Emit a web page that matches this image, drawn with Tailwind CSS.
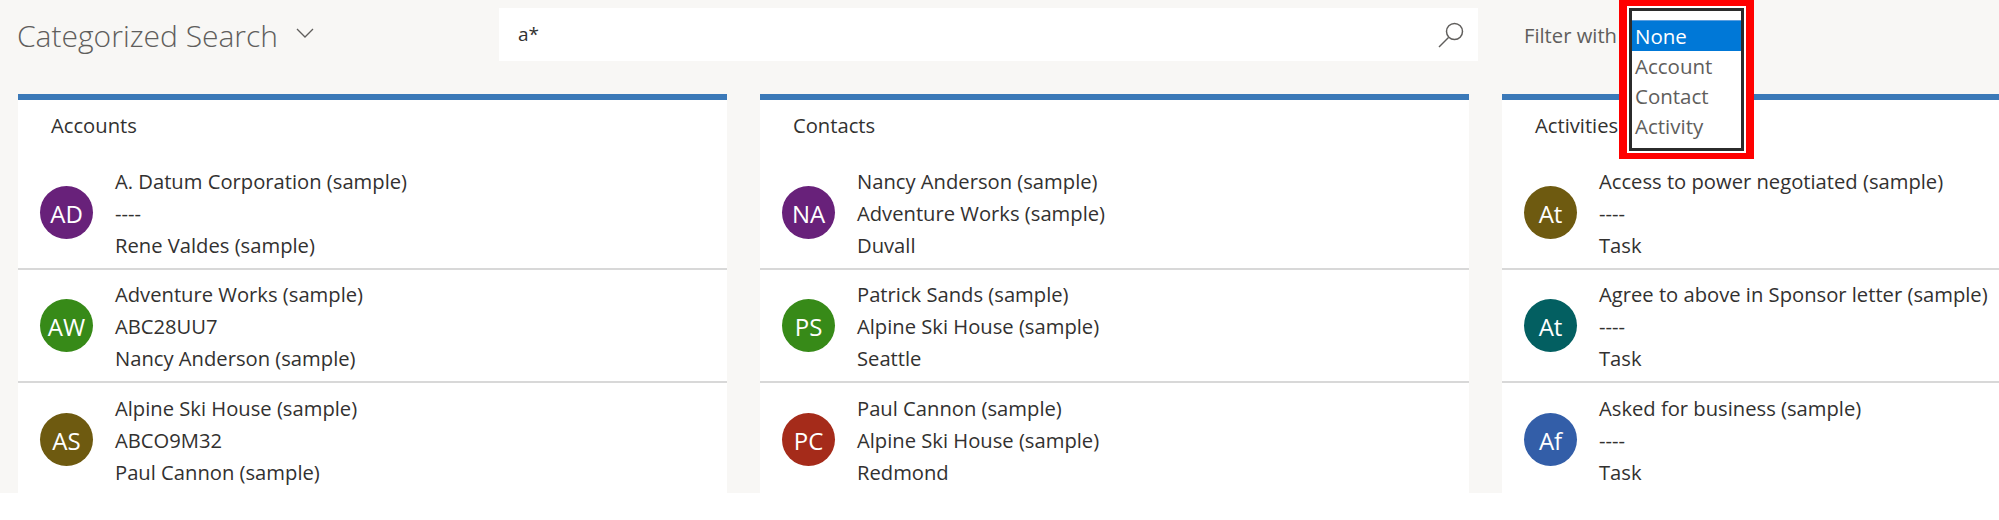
<!DOCTYPE html>
<html>
<head>
<meta charset="utf-8">
<script src="https://cdn.jsdelivr.net/npm/@tailwindcss/browser@4"></script>
</head>
<body class="bg-white font-['Open_Sans',sans-serif]">
<div class="relative h-[493px] overflow-hidden bg-[#f8f7f5] text-[#323130]">
  <header class="flex h-[94px] items-start">
    <div class="ml-[17px] mt-[13px] flex h-[45px] w-[482px] items-center">
      <h1 class="text-[30px] font-light leading-[45px] text-[#605e5c]">Categorized Search</h1>
      <svg class="mb-[6px] ml-[18px]" width="18" height="10" viewBox="0 0 18 10" fill="none" stroke="#605e5c" stroke-width="1.3"><path d="M1 1l8 8 8-8"/></svg>
    </div>
    <div class="mt-[8px] flex h-[53px] w-[979px] items-center justify-between bg-white pl-[19px] pr-[13px]">
      <span class="text-[19px]">a*</span>
      <svg width="28" height="28" viewBox="0 0 28 28" fill="none" stroke="#605e5c" stroke-width="1.5"><circle cx="17.5" cy="10.5" r="8"/><path d="M11.5 16.5L2 26"/></svg>
    </div>
    <span class="ml-[46px] mt-[22px] text-[20.2px] leading-[26px] text-[#605e5c]">Filter with</span>
  </header>

  <main class="flex gap-[33px] pl-[18px]">
    <section class="w-[709px] shrink-0 border-t-[6px] border-[#3b79b8] bg-white">
      <h2 class="pl-[33px] pt-[10px] pb-[17px] text-[20.2px] leading-[30px]">Accounts</h2>
      <ul class="divide-y-2 divide-[#d8d8d8]">
        <li class="flex h-[113px] items-center pl-[22px]"><div class="flex size-[53px] shrink-0 items-center justify-center rounded-full bg-[#68217a] pt-[2px] text-[24px] text-white">AD</div><div class="ml-[22px] pt-[1px] text-[20.2px] leading-[32.3px]"><p>A. Datum Corporation (sample)</p><p>----</p><p>Rene Valdes (sample)</p></div></li>
        <li class="flex h-[113px] items-center pl-[22px]"><div class="flex size-[53px] shrink-0 items-center justify-center rounded-full bg-[#378a18] pt-[2px] text-[24px] text-white">AW</div><div class="ml-[22px] pt-[1px] text-[20.2px] leading-[32.3px]"><p>Adventure Works (sample)</p><p>ABC28UU7</p><p>Nancy Anderson (sample)</p></div></li>
        <li class="flex h-[113px] items-center pl-[22px]"><div class="flex size-[53px] shrink-0 items-center justify-center rounded-full bg-[#6e5a10] pt-[2px] text-[24px] text-white">AS</div><div class="ml-[22px] pt-[1px] text-[20.2px] leading-[32.3px]"><p>Alpine Ski House (sample)</p><p>ABCO9M32</p><p>Paul Cannon (sample)</p></div></li>
      </ul>
    </section>
    <section class="w-[709px] shrink-0 border-t-[6px] border-[#3b79b8] bg-white">
      <h2 class="pl-[33px] pt-[10px] pb-[17px] text-[20.2px] leading-[30px]">Contacts</h2>
      <ul class="divide-y-2 divide-[#d8d8d8]">
        <li class="flex h-[113px] items-center pl-[22px]"><div class="flex size-[53px] shrink-0 items-center justify-center rounded-full bg-[#68217a] pt-[2px] text-[24px] text-white">NA</div><div class="ml-[22px] pt-[1px] text-[20.2px] leading-[32.3px]"><p>Nancy Anderson (sample)</p><p>Adventure Works (sample)</p><p>Duvall</p></div></li>
        <li class="flex h-[113px] items-center pl-[22px]"><div class="flex size-[53px] shrink-0 items-center justify-center rounded-full bg-[#378a18] pt-[2px] text-[24px] text-white">PS</div><div class="ml-[22px] pt-[1px] text-[20.2px] leading-[32.3px]"><p>Patrick Sands (sample)</p><p>Alpine Ski House (sample)</p><p>Seattle</p></div></li>
        <li class="flex h-[113px] items-center pl-[22px]"><div class="flex size-[53px] shrink-0 items-center justify-center rounded-full bg-[#a52b1a] pt-[2px] text-[24px] text-white">PC</div><div class="ml-[22px] pt-[1px] text-[20.2px] leading-[32.3px]"><p>Paul Cannon (sample)</p><p>Alpine Ski House (sample)</p><p>Redmond</p></div></li>
      </ul>
    </section>
    <section class="w-[709px] shrink-0 border-t-[6px] border-[#3b79b8] bg-white">
      <h2 class="pl-[33px] pt-[10px] pb-[17px] text-[20.2px] leading-[30px]">Activities</h2>
      <ul class="divide-y-2 divide-[#d8d8d8]">
        <li class="flex h-[113px] items-center pl-[22px]"><div class="flex size-[53px] shrink-0 items-center justify-center rounded-full bg-[#6e5a10] pt-[2px] text-[24px] text-white">At</div><div class="ml-[22px] pt-[1px] text-[20.2px] leading-[32.3px]"><p>Access to power negotiated (sample)</p><p>----</p><p>Task</p></div></li>
        <li class="flex h-[113px] items-center pl-[22px]"><div class="flex size-[53px] shrink-0 items-center justify-center rounded-full bg-[#035f61] pt-[2px] text-[24px] text-white">At</div><div class="ml-[22px] pt-[1px] text-[20.2px] leading-[32.3px]"><p>Agree to above in Sponsor letter (sample)</p><p>----</p><p>Task</p></div></li>
        <li class="flex h-[113px] items-center pl-[22px]"><div class="flex size-[53px] shrink-0 items-center justify-center rounded-full bg-[#335ea8] pt-[2px] text-[24px] text-white">Af</div><div class="ml-[22px] pt-[1px] text-[20.2px] leading-[32.3px]"><p>Asked for business (sample)</p><p>----</p><p>Task</p></div></li>
      </ul>
    </section>
  </main>

  <div class="absolute left-[1619px] top-0 h-[159px] w-[135px] border-x-[8px] border-y-[6px] border-[#ff0000] bg-white p-[2px]">
    <div class="h-full border-[3px] border-[#2b2b2b] pt-[9px] text-[20.5px] leading-[30px] text-[#605e5c]">
      <div class="h-[31px] border-t border-[#5a9fe0] bg-[#0078d7] pl-[3px] text-white">None</div>
      <div class="pl-[3px]">Account</div>
      <div class="pl-[3px]">Contact</div>
      <div class="pl-[3px]">Activity</div>
    </div>
  </div>
</div>
</body>
</html>
